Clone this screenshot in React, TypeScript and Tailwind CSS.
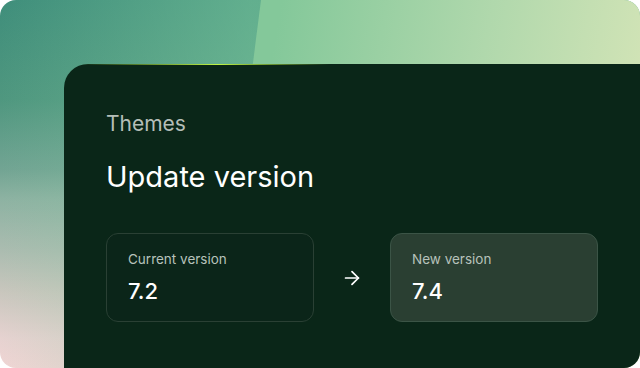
import { ArrowRight } from "lucide-react";

function VersionCard({ label, value, active }: { label: string; value: string; active?: boolean }) {
  return (
    <div
      className={
        "flex h-[89px] w-[208px] flex-col rounded-[12px] border px-[21px] pt-[16px] " +
        (active ? "border-[#3b5446] bg-[#2a3f32]" : "border-[#2a4034] bg-[#0b2519]")
      }
    >
      <span className="text-[13.5px] leading-[18px] text-[#b7c2bb]">{label}</span>
      <span className="mt-[10px] text-[22px] font-medium leading-[26px] text-white">{value}</span>
    </div>
  );
}

export default function App() {
  return (
    <div className="h-[368px] w-[640px] bg-white font-['Inter',sans-serif]">
      <div className="relative flex h-full w-full flex-col overflow-hidden rounded-[16px] bg-[linear-gradient(90deg,rgba(130,205,160,0)_0px,rgba(130,205,160,0.52)_250px),linear-gradient(180deg,#3f8e7b_0%,#4f977f_27%,#72a493_46%,#8db2a2_54%,#abbcb0_68%,#c8c6bd_79%,#e6d2d0_92%,#f0d5d4_100%)] pl-16 pt-16">
        {/* lighter slanted band on the right */}
        <div className="pointer-events-none absolute inset-0 bg-[linear-gradient(100deg,#84c89a_40%,#b0d8ac_70%,#dbe7b9_100%)] [clip-path:polygon(261px_0,640px_0,640px_368px,214px_368px)]" />

        <div className="relative flex-1 rounded-tl-[24px] bg-[#0a2618] px-[42px] pt-[48px]">
          <div className="absolute left-[16px] top-0 h-px w-[250px] bg-[linear-gradient(90deg,rgba(181,240,58,0)_0%,#c0f545_55%,rgba(181,240,58,0)_100%)]" />
          <div className="text-[21px] leading-[24px] text-[#b5beb8]">Themes</div>
          <div className="mt-[24px] text-[29px] leading-[34px] text-white">Update version</div>

          <div className="mt-[39px] flex items-center">
            <VersionCard label="Current version" value="7.2" />
            <div className="flex w-[76px] justify-center">
              <ArrowRight className="h-[22px] w-[22px] text-white" strokeWidth={1.9} />
            </div>
            <VersionCard label="New version" value="7.4" active />
          </div>
        </div>
      </div>
    </div>
  );
}
